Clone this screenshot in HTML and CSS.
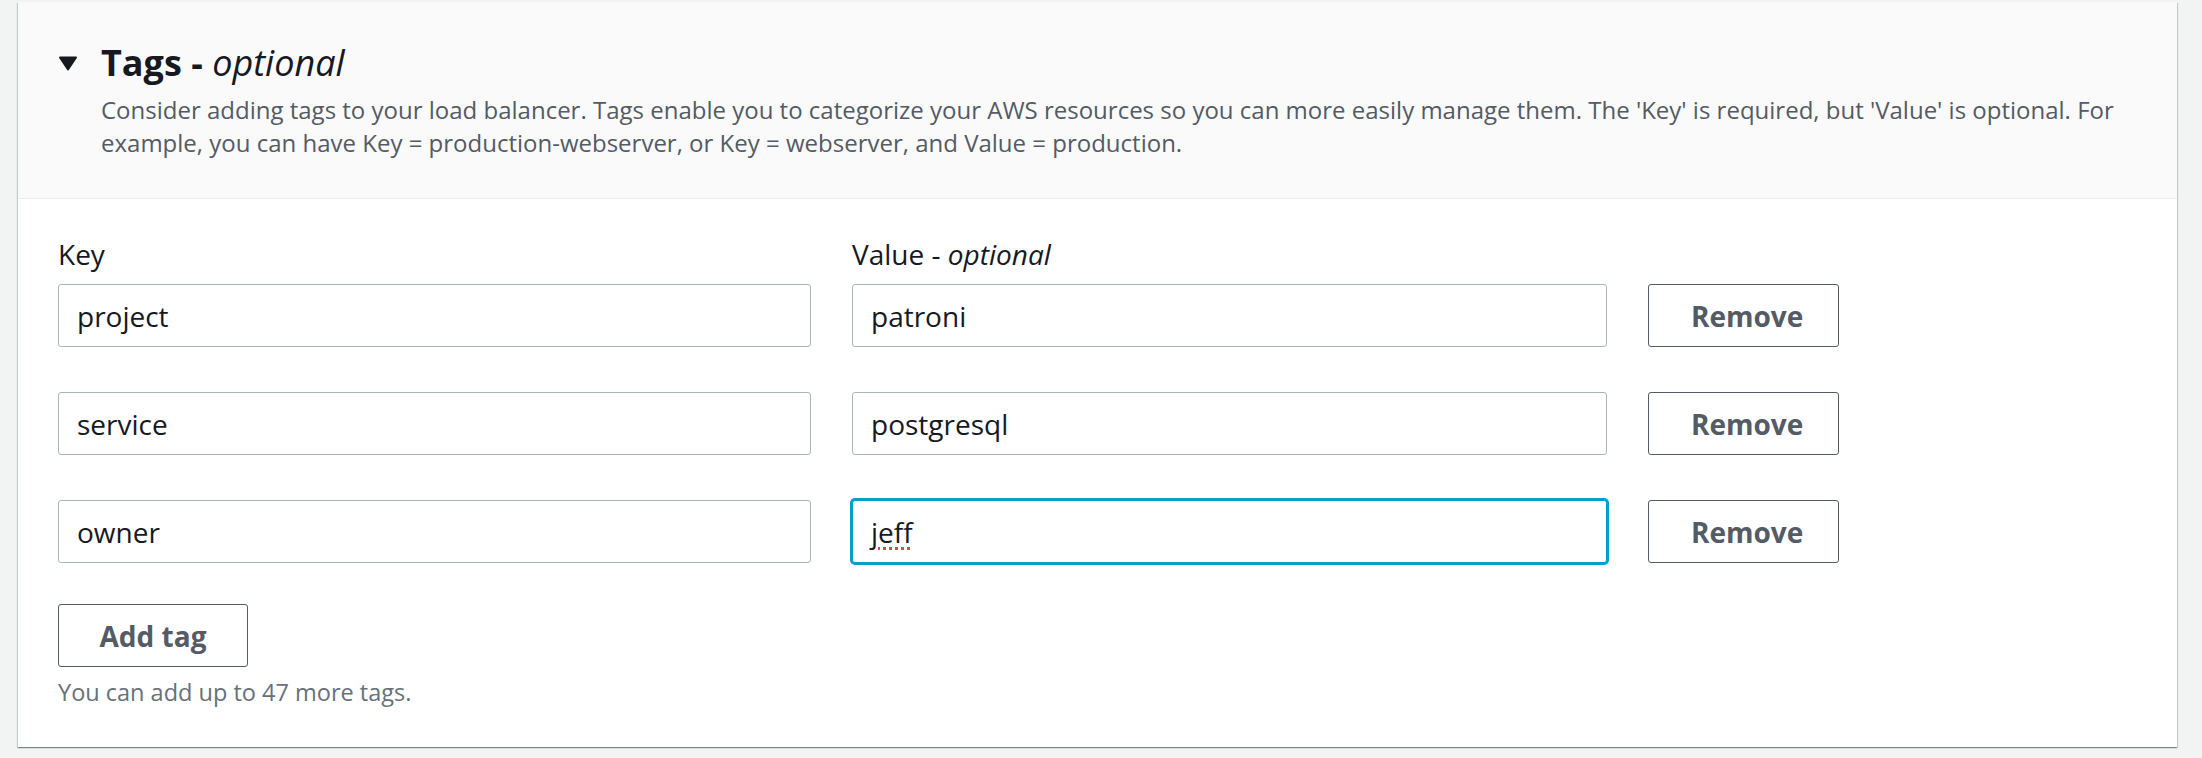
FILE: index.html
```html
<!DOCTYPE html>
<html lang="en">
<head>
<meta charset="utf-8">
<title>Tags - optional</title>
<link rel="stylesheet" href="styles.css">
</head>
<body>
<div class="page">
  <section class="panel">
    <header class="panel-header">
      <div class="title-row">
        <svg class="caret" width="20" height="15" viewBox="0 0 20 15" aria-hidden="true"><path d="M2 1.5 L18 1.5 L10 13.5 Z" fill="#16191f" stroke="#16191f" stroke-width="2" stroke-linejoin="round"/></svg>
        <h2 class="title"><b>Tags -</b> <i>optional</i></h2>
      </div>
      <p class="desc">Consider adding tags to your load balancer. Tags enable you to categorize your AWS resources so you can more easily manage them. The 'Key' is required, but 'Value' is optional. For example, you can have Key = production-webserver, or Key = webserver, and Value = production.</p>
    </header>
    <div class="panel-body">
      <div class="tag-grid">
        <label class="label">Key</label>
        <label class="label">Value - <i>optional</i></label>
        <span></span>

        <input class="input" type="text" value="project">
        <input class="input" type="text" value="patroni">
        <button class="btn" type="button">Remove</button>

        <input class="input" type="text" value="service">
        <input class="input" type="text" value="postgresql">
        <button class="btn" type="button">Remove</button>

        <input class="input" type="text" value="owner">
        <div class="input focused" role="textbox"><span class="typo">jeff</span></div>
        <button class="btn" type="button">Remove</button>
      </div>
      <button class="btn add" type="button">Add tag</button>
      <p class="hint">You can add up to 47 more tags.</p>
    </div>
  </section>
</div>
</body>
</html>
```
FILE: styles.css
```css
* { box-sizing: border-box; }
html, body { margin: 0; padding: 0; }
body {
  background: #f2f3f3;
  font-family: "Open Sans", "Noto Sans", sans-serif;
  color: #16191f;
  width: 2202px;
  height: 758px;
  overflow: hidden;
}
.page {
  padding: 2px 25px 0 18px;
}
.panel {
  background: #ffffff;
  box-shadow: 0 1px 1px 0 rgba(0, 28, 36, 0.3), 1px 1px 1px 0 rgba(0, 28, 36, 0.15), -1px 1px 1px 0 rgba(0, 28, 36, 0.15);
}
.panel-header {
  background: #fafafa;
  border-bottom: 1px solid #eaeded;
  padding: 39px 40px 39px 40px;
}
.title-row {
  display: flex;
  align-items: center;
  gap: 23px;
  height: 44px;
}
.caret {
  display: block;
  flex: none;
  margin-top: 1px;
}
.title {
  margin: 0;
  font-size: 36px;
  line-height: 44px;
  font-weight: 400;
  color: #16191f;
}
.title b { font-weight: 700; }
.title i { font-style: italic; }
.desc {
  margin: 8px 0 0 43px;
  font-size: 24px;
  line-height: 33px;
  color: #545b64;
}
.panel-body {
  padding: 38px 40px 39px 40px;
}
.tag-grid {
  display: grid;
  grid-template-columns: 753px 755px 191px;
  column-gap: 41px;
  row-gap: 45px;
  align-items: center;
}
.label {
  font-size: 28px;
  line-height: 34px;
  color: #16191f;
  margin-bottom: -32px;
}
.label i { font-style: italic; }
.input {
  height: 63px;
  border: 1px solid #aab7b8;
  border-radius: 3px;
  padding: 0 18px;
  font-family: "Open Sans", "Noto Sans", sans-serif;
  font-size: 28px;
  color: #16191f;
  background: #ffffff;
  outline: none;
  display: flex;
  align-items: center;
}
.input.focused {
  border-color: #00a1c9;
  box-shadow: 0 0 0 2px #00a1c9;
}
.typo {
  text-decoration: underline dotted #e0474c;
  text-decoration-thickness: 3px;
  text-underline-offset: 4px;
}
.btn {
  height: 63px;
  border: 1px solid #545b64;
  border-radius: 3px;
  background: #ffffff;
  color: #545b64;
  font-family: "Open Sans", "Noto Sans", sans-serif;
  font-weight: 700;
  font-size: 28px;
  padding: 0 42px;
}
.add {
  display: block;
  width: 190px;
  margin-top: 41px;
  padding: 0;
}
.hint {
  margin: 9px 0 0 0;
  font-size: 23.5px;
  line-height: 32px;
  color: #687078;
}
```
